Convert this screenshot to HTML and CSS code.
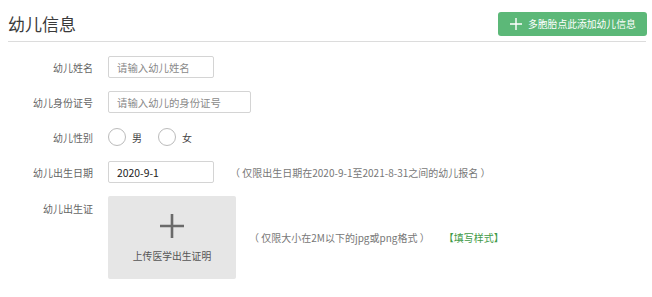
FILE: index.html
```html
<!DOCTYPE html>
<html lang="zh-CN">
<head>
<meta charset="utf-8">
<title>幼儿信息</title>
<link rel="stylesheet" href="styles.css">
</head>
<body>
<div class="page">
  <div class="header">
    <h1 class="title">幼儿信息</h1>
    <button class="add-btn" type="button">
      <svg class="add-icon" width="12" height="12" viewBox="0 0 12 12"><path d="M6 0V12M0 6H12" stroke="#fff" stroke-width="1.4" fill="none"/></svg>
      <span>多胞胎点此添加幼儿信息</span>
    </button>
  </div>
  <div class="form">
    <div class="row">
      <label class="label">幼儿姓名</label>
      <div class="field"><input class="input input-short" placeholder="请输入幼儿姓名"></div>
    </div>
    <div class="row">
      <label class="label">幼儿身份证号</label>
      <div class="field"><input class="input input-long" placeholder="请输入幼儿的身份证号"></div>
    </div>
    <div class="row">
      <label class="label">幼儿性别</label>
      <div class="field radios">
        <span class="radio"><span class="circle"></span><span class="radio-text">男</span></span>
        <span class="radio"><span class="circle"></span><span class="radio-text">女</span></span>
      </div>
    </div>
    <div class="row">
      <label class="label">幼儿出生日期</label>
      <div class="field">
        <input class="input input-short input-value" value="2020-9-1">
        <span class="note note-date">（ 仅限出生日期在2020-9-1至2021-8-31之间的幼儿报名 ）</span>
      </div>
    </div>
    <div class="row row-top">
      <label class="label label-top">幼儿出生证</label>
      <div class="field">
        <div class="upload">
          <svg class="upload-plus" width="26" height="26" viewBox="0 0 26 26"><path d="M13 1V25M1 13H25" stroke="#6a6a6a" stroke-width="2.6" fill="none"/></svg>
          <span class="upload-text">上传医学出生证明</span>
        </div>
        <span class="note note-file">（ 仅限大小在2M以下的jpg或png格式 ）</span>
        <a class="sample" href="#">【填写样式】</a>
      </div>
    </div>
  </div>
</div>
</body>
</html>
```

FILE: styles.css
```css
* { box-sizing: border-box; }
html, body { margin: 0; padding: 0; background: #fff; }
body {
  font-family: "Noto Sans CJK SC", "Noto Sans", sans-serif;
  color: #555;
}
.page { width: 652px; height: 297px; overflow: hidden; }
.header {
  margin: 0 6px 0 8px;
  padding-top: 12px;
  padding-bottom: 5px;
  border-bottom: 1px solid #dcdcdc;
  display: flex;
  align-items: center;
  justify-content: space-between;
}
.title {
  margin: 0;
  font-size: 17px;
  font-weight: normal;
  color: #3a3a3a;
  line-height: 24px;
}
.add-btn {
  height: 24px;
  width: 149px;
  margin-right: -1px;
  border: none;
  border-radius: 3px;
  background: #5cb878;
  color: #fff;
  display: flex;
  align-items: center;
  padding: 0 0 0 12px;
  font-family: inherit;
  font-size: 9.8px;
  cursor: pointer;
}
.add-icon { margin-right: 6px; flex: none; }
.form { padding-top: 14px; }
.row {
  display: grid;
  grid-template-columns: 93px 1fr;
  column-gap: 15px;
  align-items: center;
  height: 22px;
  margin-bottom: 13px;
}
.row-top { align-items: start; height: auto; }
.label {
  text-align: right;
  font-size: 10px;
  color: #666;
  white-space: nowrap;
}
.label-top { padding-top: 5px; }
.field { display: flex; align-items: center; }
.input {
  height: 22px;
  border: 1px solid #d4d4d4;
  border-radius: 2px;
  padding: 0 8px;
  font-family: inherit;
  font-size: 10.4px;
  color: #333;
  outline: none;
}
.input::placeholder { color: #8a8a8a; }
.input-short { width: 106px; }
.input-long { width: 143px; }
.input-value { color: #222; }
.radios { gap: 0; }
.radio { display: flex; align-items: center; margin-right: 16px; }
.circle {
  width: 18px;
  height: 18px;
  border: 1px solid #bbb;
  border-radius: 50%;
  background: #fff;
}
.radio-text { margin-left: 6px; font-size: 10px; color: #444; }
.note { font-size: 10px; color: #777; white-space: nowrap; }
.note-date { margin-left: 16px; }
.upload {
  width: 128px;
  height: 83px;
  background: #e6e6e6;
  border-radius: 2px;
  display: flex;
  flex-direction: column;
  align-items: center;
  padding-top: 17px;
}
.upload-plus { display: block; }
.upload-text { margin-top: 10px; font-size: 9.8px; color: #555; }
.note-file { margin-left: 13px; }
.sample {
  margin-left: 14px;
  font-size: 10px;
  color: #3f9a47;
  text-decoration: none;
}
```
